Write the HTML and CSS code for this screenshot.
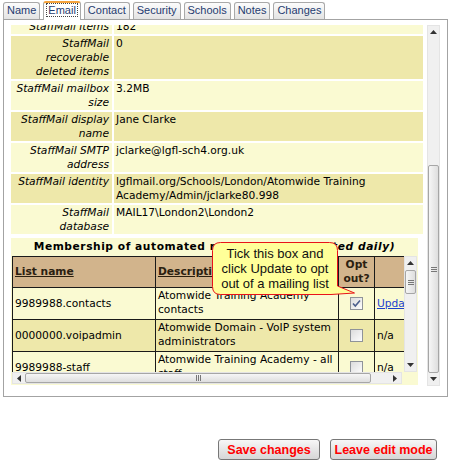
FILE: index.html
```html
<!DOCTYPE html>
<html>
<head>
<meta charset="utf-8">
<link rel="stylesheet" href="styles.css">
</head>
<body>
<div class="tabs">
  <div class="tab">Name</div>
  <div class="tab active"><span class="focus">Email</span></div>
  <div class="tab">Contact</div>
  <div class="tab">Security</div>
  <div class="tab">Schools</div>
  <div class="tab">Notes</div>
  <div class="tab">Changes</div>
</div>
<div class="panel">
  <div class="viewport">
    <div class="content">
      <table class="details">
        <tr class="light"><th>StaffMail items</th><td>182</td></tr>
        <tr class="dark"><th>StaffMail recoverable deleted items</th><td>0</td></tr>
        <tr class="light"><th>StaffMail mailbox size</th><td>3.2MB</td></tr>
        <tr class="dark"><th>StaffMail display name</th><td>Jane Clarke</td></tr>
        <tr class="light"><th>StaffMail SMTP address</th><td>jclarke@lgfl-sch4.org.uk</td></tr>
        <tr class="dark"><th>StaffMail identity</th><td>lgflmail.org/Schools/London/Atomwide Training Academy/Admin/jclarke80.998</td></tr>
        <tr class="light"><th>StaffMail database</th><td>MAIL17\London2\London2</td></tr>
      </table>
      <div class="membership">
        <div class="mtitle">Membership of automated mailing lists <i>(updated daily)</i></div>
        <div class="listgrid">
          <div class="listview">
            <table class="lists">
              <colgroup><col class="c1"><col class="c2"><col class="c3"><col class="c4"></colgroup>
              <tr class="head">
                <th><u>List name</u></th>
                <th><u>Description</u></th>
                <th class="center">Opt out?</th>
                <th></th>
              </tr>
              <tr class="light">
                <td class="mid">9989988.contacts</td>
                <td>Atomwide Training Academy contacts</td>
                <td class="center mid"><span class="cb checked"><svg viewBox="0 0 11 11" width="11" height="11"><path d="M2 5.5 L4.3 8 L9 2.5" fill="none" stroke="#4b5e8c" stroke-width="1.6"/></svg></span></td>
                <td class="mid"><a href="#" class="upd">Update</a></td>
              </tr>
              <tr class="dark">
                <td class="mid">0000000.voipadmin</td>
                <td>Atomwide Domain - VoIP system administrators</td>
                <td class="center mid"><span class="cb"></span></td>
                <td class="mid">n/a</td>
              </tr>
              <tr class="light">
                <td class="mid">9989988-staff</td>
                <td>Atomwide Training Academy - all staff</td>
                <td class="center mid"><span class="cb"></span></td>
                <td class="mid">n/a</td>
              </tr>
            </table>
          </div>
          <div class="sb-v small">
            <div class="arr"><svg width="7" height="4" viewBox="0 0 7 4"><path d="M0 4 L3.5 0 L7 4Z" fill="#333"/></svg></div>
            <div class="thumb-v small-thumb"><span class="grip-h"></span></div>
            <div class="fill"></div>
            <div class="arr"><svg width="7" height="4" viewBox="0 0 7 4"><path d="M0 0 L3.5 4 L7 0Z" fill="#333"/></svg></div>
          </div>
          <div class="sb-h">
            <div class="arr"><svg width="4" height="7" viewBox="0 0 4 7"><path d="M4 0 L0 3.5 L4 7Z" fill="#333"/></svg></div>
            <div class="thumb-h"><span class="grip-v"></span></div>
            <div class="fill"></div>
            <div class="arr"><svg width="4" height="7" viewBox="0 0 4 7"><path d="M0 0 L4 3.5 L0 7Z" fill="#333"/></svg></div>
          </div>
          <div class="corner"></div>
        </div>
      </div>
    </div>
  </div>
  <div class="sb-v big">
    <div class="arr"><svg width="7" height="4" viewBox="0 0 7 4"><path d="M0 4 L3.5 0 L7 4Z" fill="#333"/></svg></div>
    <div class="fill"></div>
    <div class="thumb-v big-thumb"><span class="grip-h"></span></div>
    <div class="arr"><svg width="7" height="4" viewBox="0 0 7 4"><path d="M0 0 L3.5 4 L7 0Z" fill="#333"/></svg></div>
  </div>
</div>
<div class="tooltip">
  <svg class="balloon" width="146" height="56" viewBox="0 0 146 56">
    <path d="M8.5 0.5 H117.5 Q125.5 0.5 125.5 8.5 V44 L142.5 51 L119 52.5 H8.5 Q0.5 52.5 0.5 44.5 V8.5 Q0.5 0.5 8.5 0.5 Z" fill="#ffff99" stroke="#e8141a" stroke-width="1"/>
  </svg>
  <div class="tiptext">Tick this box and<br>click Update to opt<br>out of a mailing list</div>
</div>
<div class="buttons">
  <button class="btn save">Save changes</button>
  <button class="btn leave">Leave edit mode</button>
</div>
</body>
</html>
```

FILE: styles.css
```css
* { box-sizing: border-box; }
body {
  margin: 0;
  width: 450px;
  height: 461px;
  overflow: hidden;
  position: relative;
  background: #fff;
  font-family: "DejaVu Sans", Verdana, sans-serif;
  font-size: 8pt;
  color: #000;
}
.tabs {
  display: flex;
  align-items: flex-end;
  gap: 3px;
  height: 19px;
  padding-left: 3px;
}
.tab {
  font-family: "Liberation Sans", Arial, sans-serif;
  font-size: 11px;
  color: #1f3b70;
  height: 17px;
  line-height: 15px;
  padding: 0 3px;
  border: 1px solid #a9a9a9;
  border-bottom: 0;
  border-radius: 3px 3px 0 0;
  background: linear-gradient(#fcfcfc, #e3e3e3);
}
.tab.active {
  position: relative;
  z-index: 1;
  height: 19px;
  margin-bottom: -1px;
  border-top: 2px solid #f5a33d;
  background: #fff;
  line-height: 15px;
}
.focus { outline: 1px dotted #444; outline-offset: 0; padding: 0 1px; }
.panel {
  margin-left: 3px;
  width: 445px;
  height: 378px;
  border: 1px solid #a3a3a3;
  padding: 5px 7px 10px 5px;
  display: flex;
  gap: 2px;
  background: #fff;
}
.viewport {
  width: 416px;
  height: 361px;
  overflow: hidden;
}
.content { margin-top: -8px; }
.details {
  width: 416px;
  border-spacing: 2px;
  table-layout: fixed;
}
.details th, .details td {
  line-height: 14px;
  padding: 0.5px 2px;
  vertical-align: top;
}
.details th {
  width: 101px;
  text-align: right;
  font-style: italic;
  font-weight: normal;
  padding-right: 3px;
}
.light th, .light td { background: #fafad2; }
.dark th, .dark td { background: #eee8aa; }
.membership {
  margin: 2px 0 0 2px;
  width: 407px;
  background: #fafad2;
}
.mtitle {
  height: 17px;
  line-height: 17px;
  text-align: center;
  font-weight: bold;
  letter-spacing: 0.55px;
  white-space: nowrap;
}
.listgrid {
  display: grid;
  grid-template-columns: 392px 13px;
  grid-template-rows: 116px 12px;
  padding: 1px 1px 1px 1px;
  row-gap: 0;
}
.listview { overflow: hidden; }
.lists {
  border-collapse: collapse;
  table-layout: fixed;
  width: 430px;
}
.c1 { width: 143px; }
.c2 { width: 183px; }
.c3 { width: 36px; }
.c4 { width: 68px; }
.lists th, .lists td {
  border: 1px solid #1a1a1a;
  line-height: 14px;
  padding: 1px 2px;
  text-align: left;
  vertical-align: top;
}
.lists th { background: #d2b48c; height: 30px; vertical-align: middle; color: #2a2010; }
.lists td { height: 32px; }
.lists .center { text-align: center; }
.lists .mid { vertical-align: middle; }
.cb {
  display: inline-block;
  width: 13px;
  height: 13px;
  border: 1px solid #8f9399;
  background: linear-gradient(135deg, #dcdcdc, #fdfdfd);
  vertical-align: middle;
}
.cb svg { display: block; }
.upd { color: #1c3fcf; text-decoration: underline; }
.sb-v {
  display: flex;
  flex-direction: column;
  background: #f0f0f0;
  border: 1px solid #e4e4e4;
}
.sb-v.big { width: 13px; height: 361px; }
.sb-v .arr { height: 12px; display: flex; align-items: center; justify-content: center; flex: none; }
.sb-v .fill, .sb-h .fill { flex: 1; }
.thumb-v {
  flex: none;
  border: 1px solid #a6a6a6;
  border-radius: 2px;
  background: linear-gradient(to right, #f6f6f6, #dedede);
  display: flex;
  align-items: center;
  justify-content: center;
}
.big-thumb { height: 208px; }
.small-thumb { height: 24px; margin-top: 1px; }
.grip-h {
  width: 6px;
  height: 5px;
  border-top: 1px solid #777;
  border-bottom: 1px solid #777;
  position: relative;
}
.grip-h::after {
  content: "";
  position: absolute;
  left: 0; right: 0; top: 1px;
  border-top: 1px solid #777;
}
.sb-h {
  display: flex;
  align-items: stretch;
  background: #f0f0f0;
  border: 1px solid #e4e4e4;
  width: 390px;
}
.sb-h .arr { width: 12px; display: flex; align-items: center; justify-content: center; flex: none; }
.thumb-h {
  width: 346px;
  flex: none;
  border: 1px solid #a6a6a6;
  border-radius: 2px;
  background: linear-gradient(#f6f6f6, #dedede);
  display: flex;
  align-items: center;
  justify-content: center;
}
.grip-v {
  width: 5px;
  height: 6px;
  border-left: 1px solid #777;
  border-right: 1px solid #777;
  position: relative;
}
.grip-v::after {
  content: "";
  position: absolute;
  top: 0; bottom: 0; left: 1px;
  border-left: 1px solid #777;
}
.tooltip {
  position: absolute;
  left: 212px;
  top: 242px;
  width: 146px;
  height: 56px;
}
.balloon { position: absolute; left: 0; top: 0; }
.tiptext {
  position: relative;
  width: 126px;
  padding-top: 4px;
  text-align: center;
  font-family: "Liberation Sans", Arial, sans-serif;
  font-size: 13px;
  line-height: 15px;
  color: #111;
}
.buttons {
  display: flex;
  justify-content: flex-end;
  gap: 10px;
  margin-top: 42px;
  padding-right: 13px;
}
.btn {
  height: 21px;
  padding: 0;
  border: 1px solid #777;
  border-radius: 3px;
  background: linear-gradient(#f7f7f7, #e6e6e6 50%, #d6d6d6);
  font-family: "Liberation Sans", Arial, sans-serif;
  font-weight: bold;
  font-size: 12.5px;
  color: #f00;
}
.save { width: 102px; }
.leave { width: 107px; }
```
